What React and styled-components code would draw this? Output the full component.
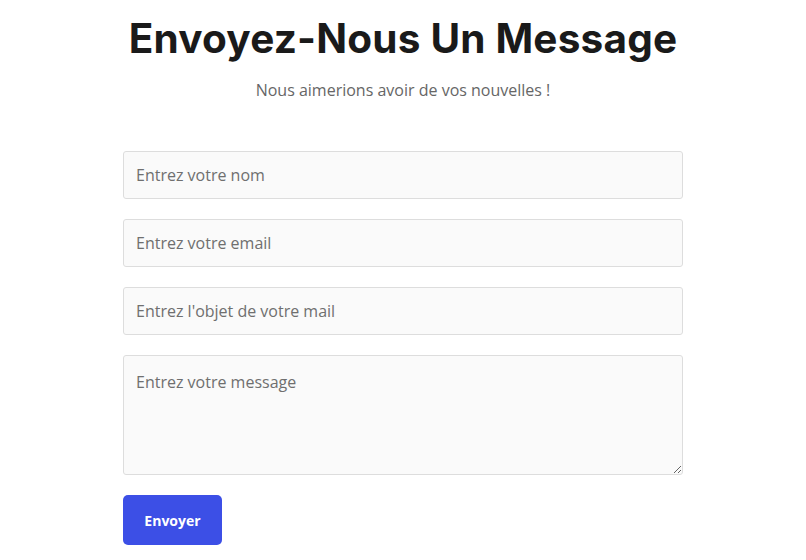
import styled, { createGlobalStyle } from "styled-components";

const GlobalStyle = createGlobalStyle`
	body {
		margin: 0;
		background: #ffffff;
		font-family: "Open Sans", "Liberation Sans", sans-serif;
	}
	* {
		box-sizing: border-box;
	}
`;

const Section = styled.section`
	display: flex;
	flex-direction: column;
	align-items: center;
	padding-top: 14px;
`;

const Title = styled.h1`
	margin: 0;
	font-family: "Inter", "Liberation Sans", sans-serif;
	font-weight: 700;
	font-size: 40.5px;
	line-height: 50px;
	letter-spacing: 0.2px;
	color: #1a1a1a;
`;

const Subtitle = styled.p`
	margin: 14px 0 0;
	font-size: 16px;
	line-height: 24px;
	color: #666666;
`;

const Form = styled.form`
	width: 560px;
	margin-top: 49px;
	display: flex;
	flex-direction: column;
	gap: 20px;
`;

const Field = styled.input`
	width: 100%;
	height: 48px;
	padding: 0 12px;
	border: 1px solid #dddddd;
	border-radius: 3px;
	background: #fafafa;
	font-family: inherit;
	font-size: 16px;
	color: #333333;
	outline: none;

	&::placeholder {
		color: #6f6f6f;
	}
`;

const Message = styled(Field).attrs({ as: "textarea" })`
	height: 120px;
	padding: 14px 12px;
	resize: vertical;
	line-height: 24px;
`;

const Submit = styled.button`
	align-self: flex-start;
	width: 99px;
	height: 50px;
	border: 0;
	border-radius: 5px;
	background: #3c4fe6;
	color: #ffffff;
	font-family: "Open Sans", "Liberation Sans", sans-serif;
	font-weight: 700;
	font-size: 14px;
	cursor: pointer;
`;

function App() {
	return (
		<>
			<GlobalStyle />
			<Section>
				<Title>Envoyez-Nous Un Message</Title>
				<Subtitle>Nous aimerions avoir de vos nouvelles !</Subtitle>
				<Form onSubmit={(e) => e.preventDefault()}>
					<Field type="text" placeholder="Entrez votre nom" />
					<Field type="email" placeholder="Entrez votre email" />
					<Field type="text" placeholder="Entrez l'objet de votre mail" />
					<Message placeholder="Entrez votre message" />
					<Submit type="submit">Envoyer</Submit>
				</Form>
			</Section>
		</>
	);
}

export default App;
